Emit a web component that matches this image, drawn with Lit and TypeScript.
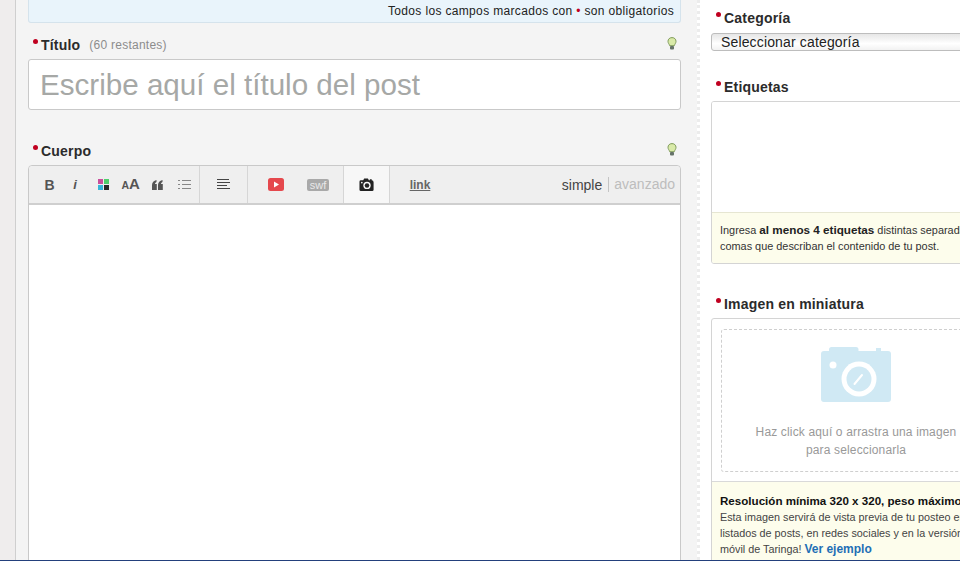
import { LitElement, html, css, svg } from "lit";
import { customElement } from "lit/decorators.js";

const bulb = html`<svg class="bulb" width="10" height="13" viewBox="0 0 10 13"><path d="M5 .6C2.600.6 1 2.200 1 4.300c0 1.900 1.300 2.800 1.700 4.400h4.600C7.700 7.100 9 6.200 9 4.300 9 2.200 7.400.6 5 .6z" fill="#d9eaa8" stroke="#7f9a5a" stroke-width="1"/><rect x="3" y="9" width="4" height="3.500" rx="1" fill="#667369"/></svg>`;

const smallCamera = svg`<path fill="#222" d="M2 3h2.500l1-2h4l1 2h1V2h2v1a2 2 0 0 1 2 2v8a1.500 1.500 0 0 1-1.500 1.500h-12A1.500 1.500 0 0 1 .5 13V4.500A1.500 1.500 0 0 1 2 3z"/><circle cx="8.500" cy="8.500" r="3.900" fill="#f7f7f7"/><circle cx="8.500" cy="8.500" r="2.400" fill="#222"/><circle cx="3" cy="5.500" r=".9" fill="#f7f7f7"/>`;

const bigCamera = svg`<path fill="#d0e9f4" d="M3 4H8V2.500Q8 0 10.500 0H35Q37.500 0 37.500 2.500V4H55V1H60V4H67Q70 4 70 7V52Q70 55 67 55H3Q0 55 0 52V7Q0 4 3 4z"/><circle cx="38" cy="32" r="17.500" fill="#fff"/><circle cx="38" cy="32" r="12.500" fill="#d0e9f4"/><path d="M33.500 37L41 28" stroke="#fff" stroke-width="2" stroke-linecap="round"/><circle cx="12" cy="18" r="3.500" fill="#fff"/>`;

@customElement("app-root")
export class AppRoot extends LitElement {
  static styles = css`
    :host { display: block; width: 960px; height: 561px; overflow: hidden; font-family: "Liberation Sans", Arial, sans-serif; color: #222; }
    .page { height: 561px; display: flex; flex-direction: column; }
    .cols { flex: 1; min-height: 0; display: flex; overflow: hidden; }
    .strip { width: 15px; flex: none; background: #efeded; border-right: 1px solid #cfcfcf; }
    .main { width: 653px; flex: none; background: #f4f4f4; padding: 0 16px 0 12px; }
    .side { flex: 1; min-width: 0; background: #fff; border-left: 3px dotted #ececec; padding: 0 0 0 11px; overflow: hidden; }
    .notice { height: 22px; background: #e9f4fb; border: 1px solid #d5e3ec; border-top: 0; border-radius: 0 0 3px 3px; display: flex; align-items: center; justify-content: flex-end; padding: 0 6px 0 0; font-size: 12px; letter-spacing: .34px; color: #222; }
    .dot { color: #c00020; }
    .label { display: flex; align-items: center; font-size: 14px; font-weight: bold; letter-spacing: .2px; color: #2b2b2b; height: 16px; position: relative; padding-left: 13px; }
    .label::before { content: ""; position: absolute; left: 5px; top: 2px; width: 5px; height: 5px; border-radius: 50%; background: #c00020; }
    .label small { font-size: 12px; font-weight: normal; color: #8c8c8c; margin-left: 9px; letter-spacing: .25px; }
    .bulb { margin-left: auto; margin-right: 4px; margin-top: -3px; }
    .l1 { margin-top: 14px; }
    .title { margin-top: 6px; height: 49px; background: #fff; border: 1px solid #c9c9c9; border-radius: 3px; font-size: 29.600px; color: #a6a8a6; display: flex; align-items: center; padding-left: 11px; }
    .l2 { margin-top: 33px; }
    .editor { margin-top: 6px; height: 600px; background: #fff; border: 1px solid #c9c9c9; border-radius: 4px 4px 0 0; }
    .bar { height: 37px; background: #efefef; border-bottom: 2px solid #cfcfcf; display: flex; align-items: stretch; border-radius: 4px 4px 0 0; }
    .g { display: flex; border-right: 1px solid #d6d6d6; box-sizing: border-box; }
    .g1 { width: 171px; padding-left: 7px; }
    .g2 { width: 48px; }
    .g3 { width: 96px; padding-left: 7px; }
    .g4 { width: 46px; background: #f7f7f7; }
    .g5 { width: 60px; border: 0; }
    .b { width: 27px; flex: none; display: flex; align-items: center; justify-content: center; color: #555; }
    .w { flex: 1; }
    .wide { width: 42px; }
    .bt { font-size: 14px; font-weight: bold; }
    .it { font-family: "Liberation Sans", sans-serif; font-style: italic; font-weight: bold; font-size: 13px; padding-right: 3px; box-sizing: border-box; }
    .aa { font-weight: bold; font-size: 15px; letter-spacing: -.3px; align-items: baseline; padding-top: 9px; box-sizing: border-box; }
    .aa i { font-style: normal; font-size: 10.500px; }
    .lnk { font-size: 12px; font-weight: bold; text-decoration: underline; color: #666; }
    .modes { margin-left: auto; display: flex; align-items: center; font-size: 14px; color: #444; padding-right: 5px; }
    .modes span { color: #bdbdbd; border-left: 1px solid #c4c4c4; margin-left: 6px; padding-left: 5px; line-height: 15px; }
    .l3 { margin-top: 10px; }
    .select { margin-top: 7px; width: 290px; height: 18px; box-sizing: border-box; border: 1px solid #bdbdbd; border-radius: 3px; background: linear-gradient(#e6e6e6, #fff 60%, #f2f2f2); font-size: 14px; letter-spacing: .15px; padding-left: 9px; display: flex; align-items: center; color: #222; }
    .l4 { margin-top: 28px; }
    .box { margin-top: 6px; width: 290px; box-sizing: border-box; border: 1px solid #d4d4d4; border-radius: 3px; overflow: hidden; }
    .tags { height: 110px; background: #fff; }
    .hint { background: #fdfdec; border-top: 1px solid #e6e6d2; padding: 9px 8px; font-size: 10.900px; line-height: 16px; white-space: nowrap; color: #333; }
    .hint b { font-size: 11.700px; color: #222; }
    .l5 { margin-top: 32px; }
    .pick { padding: 10px 9px 9px; }
    .drop { height: 143px; border: 1px dashed #cfcfcf; border-radius: 3px; box-sizing: border-box; display: flex; flex-direction: column; align-items: center; font-size: 12px; line-height: 18px; color: #999; padding-top: 17px; text-align: center; letter-spacing: .15px; }
    .drop svg { margin-bottom: 21px; }
    .info { background: #fdfdec; border-top: 1px solid #d9d9d9; padding: 11px 8px 9px; font-size: 10.800px; line-height: 16px; white-space: nowrap; color: #444; }
    .info b { font-size: 11.600px; color: #111; }
    .info a { color: #1f6fb5; font-weight: bold; font-size: 12px; }
    .foot { height: 1px; flex: none; background: #23407c; }
  `;

  render() {
    return html`<div class="page">
      <div class="cols">
        <div class="strip"></div>
        <div class="main">
          <div class="notice"><span>Todos los campos marcados con <span class="dot">•</span> son obligatorios</span></div>
          <div class="label l1">Título <small>(60 restantes)</small>${bulb}</div>
          <div class="title">Escribe aquí el título del post</div>
          <div class="label l2">Cuerpo ${bulb}</div>
          <div class="editor">
            <div class="bar">
              <div class="g g1">
                <div class="b bt">B</div>
                <div class="b it">i</div>
                <div class="b"><svg width="11" height="11" viewBox="0 0 11 11"><rect width="5" height="5" fill="#c94f9b"/><rect x="6" width="5" height="5" fill="#4fcf6c"/><rect y="6" width="5" height="5" fill="#36b6d8"/><rect x="6" y="6" width="5" height="5" fill="#2a2a2a"/></svg></div>
                <div class="b aa"><i>A</i>A</div>
                <div class="b"><svg width="11" height="10" viewBox="0 0 11 10" fill="#555"><path d="M4.500 0v2C3.400 2.500 3 3.200 3 4h1.800v6H0V5C0 2.500 1.800.6 4.500 0zM10.500 0v2C9.400 2.500 9 3.200 9 4h1.800v6H6V5C6 2.500 7.800.6 10.500 0z"/></svg></div>
                <div class="b"><svg width="13" height="11" viewBox="0 0 13 11" stroke="#888" fill="none"><path d="M0 1.500h2M4 1.500h9M0 5.500h2M4 5.500h9M0 9.500h2M4 9.500h9" stroke-width="1"/></svg></div>
              </div>
              <div class="g g2"><div class="b w"><svg width="13" height="11" viewBox="0 0 13 11" stroke="#444" fill="none"><path d="M0 .5h12M0 3.500h13M0 6.500h10M0 9.500h13"/></svg></div></div>
              <div class="g g3">
                <div class="b wide"><svg width="16" height="13" viewBox="0 0 16 13"><rect width="16" height="13" rx="2.500" fill="#e5484d"/><path d="M6 3.500l5 3-5 3z" fill="#fff"/></svg></div>
                <div class="b wide"><svg width="22" height="12" viewBox="0 0 22 12"><rect width="22" height="12" rx="2" fill="#a9a9a9"/><text x="11" y="9.500" text-anchor="middle" font-size="11" fill="#e8e8e8" font-family="Liberation Sans">swf</text></svg></div>
              </div>
              <div class="g g4"><div class="b w"><svg width="16" height="15" viewBox="0 0 17 15">${smallCamera}</svg></div></div>
              <div class="g g5"><div class="b w lnk">link</div></div>
              <div class="modes">simple<span>avanzado</span></div>
            </div>
          </div>
        </div>
        <div class="side">
          <div class="label l3">Categoría</div>
          <div class="select">Seleccionar categoría</div>
          <div class="label l4">Etiquetas</div>
          <div class="box">
            <div class="tags"></div>
            <div class="hint">Ingresa <b>al menos 4 etiquetas</b> distintas separadas por<br />comas que describan el contenido de tu post.</div>
          </div>
          <div class="label l5">Imagen en miniatura</div>
          <div class="box">
            <div class="pick">
              <div class="drop">
                <svg width="70" height="55" viewBox="0 0 70 55">${bigCamera}</svg>
                Haz click aquí o arrastra una imagen<br />para seleccionarla
              </div>
            </div>
            <div class="info"><b>Resolución mínima 320 x 320, peso máximo 5MB</b><br />Esta imagen servirá de vista previa de tu posteo en los<br />listados de posts, en redes sociales y en la versión<br />móvil de Taringa! <a>Ver ejemplo</a></div>
          </div>
        </div>
      </div>
      <div class="foot"></div>
    </div>`;
  }
}
